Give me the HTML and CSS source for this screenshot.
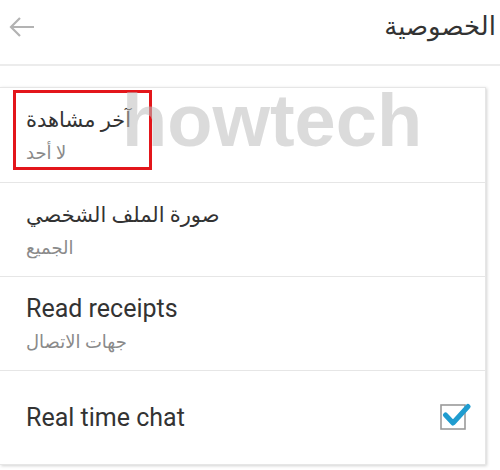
FILE: index.html
```html
<!DOCTYPE html>
<html lang="ar">
<head>
<meta charset="utf-8">
<link rel="stylesheet" href="styles.css">
</head>
<body>
<div class="screen">
  <header class="topbar">
    <svg class="back" width="28" height="22" viewBox="0 0 28 22">
      <path d="M26 11H3M12 2L3 11l9 9" fill="none" stroke="#b3b3b3" stroke-width="2.2"/>
    </svg>
    <h1 class="title" dir="rtl">الخصوصية</h1>
  </header>
  <div class="card">
    <div class="row">
      <div class="row-title" dir="rtl">آخر مشاهدة</div>
      <div class="row-sub" dir="rtl">لا أحد</div>
    </div>
    <div class="row">
      <div class="row-title" dir="rtl">صورة الملف الشخصي</div>
      <div class="row-sub" dir="rtl">الجميع</div>
    </div>
    <div class="row">
      <div class="row-title latin">Read receipts</div>
      <div class="row-sub" dir="rtl">جهات الاتصال</div>
    </div>
    <div class="row row-check">
      <div class="row-title latin">Real time chat</div>
      <svg class="check" width="34" height="34" viewBox="0 0 34 34">
        <rect x="4" y="4" width="24" height="24" fill="#fff" stroke="#9a9a9a" stroke-width="1.6"/>
        <path d="M8.5 14l7.5 8L31 5.5" fill="none" stroke="#1f9ccf" stroke-width="5" stroke-linecap="round" stroke-linejoin="round"/>
      </svg>
    </div>
  </div>
  <div class="highlight"></div>
  <div class="watermark">howtech</div>
</div>
</body>
</html>
```
FILE: styles.css
```css
html, body {
  margin: 0;
  padding: 0;
  background: #fff;
}
.screen {
  position: relative;
  width: 500px;
  height: 470px;
  overflow: hidden;
  font-family: Roboto, "DejaVu Sans", sans-serif;
  color: #333;
}
.topbar {
  height: 66px;
  display: flex;
  align-items: center;
  justify-content: space-between;
  padding: 0 4px 0 8px;
  border-bottom: 2px solid #ececec;
  box-sizing: border-box;
}
.back {
  margin-top: -10px;
}
.title {
  margin: -12px 0 0 0;
  font-size: 26px;
  font-weight: normal;
  color: #333;
}
.card {
  margin: 21px 14px 0 0;
  border: 1px solid #e6e6e6;
  border-left: none;
  box-shadow: 1px 1px 3px rgba(0,0,0,0.18);
  background: #fff;
}
.row {
  height: 94px;
  box-sizing: border-box;
  padding: 18px 0 0 26px;
  border-top: 1px solid #e6e6e6;
  display: flex;
  flex-direction: column;
  align-items: flex-start;
}
.row:first-child {
  border-top: none;
}
.row-title {
  font-size: 21px;
  line-height: 28px;
  color: #333;
}
.row-title.latin {
  font-size: 25px;
}
.row-sub {
  margin-top: 8px;
  font-size: 18px;
  line-height: 22px;
  color: #8a8a8a;
}
.row-check {
  flex-direction: row;
  align-items: center;
  justify-content: space-between;
  padding: 0 14px 0 26px;
}
.highlight {
  position: absolute;
  left: 13px;
  top: 90px;
  width: 133px;
  height: 74px;
  border: 3px solid #e3161b;
}
.watermark {
  position: absolute;
  left: 122px;
  top: 76px;
  font-family: "Liberation Sans", Arial, sans-serif;
  font-weight: bold;
  font-size: 74px;
  line-height: 90px;
  color: rgba(190,190,190,0.55);
  pointer-events: none;
}
```
